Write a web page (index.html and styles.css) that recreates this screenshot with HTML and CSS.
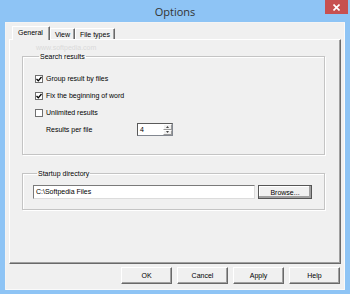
FILE: index.html
```html
<!DOCTYPE html>
<html lang="en">
<head>
  <meta charset="UTF-8" />
  <title>Options</title>
  <link rel="stylesheet" href="styles.css">
</head>
<body>

  <div class="window">

    <!-- Title bar -->
    <div class="titlebar">
      <span></span>
      <span class="title">Options</span>
      <button class="close-btn">
        <svg width="7" height="7" viewBox="0 0 7 7"><path d="M0.5 0.5 L6.5 6.5 M6.5 0.5 L0.5 6.5" stroke="#fff" stroke-width="1.6"/></svg>
      </button>
    </div>

    <div class="client">

      <!-- Tabs -->
      <div class="tabs">
        <div class="tab active">General</div>
        <div class="tab">View</div>
        <div class="tab">File types</div>
      </div>

      <!-- Tab page -->
      <div class="panel">
        <span class="watermark">www.softpedia.com</span>

        <fieldset class="group search-group">
          <legend>Search results</legend>
          <label class="check-row">
            <span class="checkbox checked"><svg width="6" height="6" viewBox="0 0 6 6"><path d="M0.5 3 L2.3 4.8 L5.5 1" fill="none" stroke="#000" stroke-width="1.3"/></svg></span>
            Group result by files
          </label>
          <label class="check-row">
            <span class="checkbox checked"><svg width="6" height="6" viewBox="0 0 6 6"><path d="M0.5 3 L2.3 4.8 L5.5 1" fill="none" stroke="#000" stroke-width="1.3"/></svg></span>
            Fix the beginning of word
          </label>
          <label class="check-row">
            <span class="checkbox"></span>
            Unlimited results
          </label>
          <div class="check-row spin-row">
            <span class="spin-label">Results per file</span>
            <div class="spinner">
              <span class="spin-value">4</span>
              <div class="spin-btns">
                <span class="spin-btn"><svg width="3" height="2" viewBox="0 0 3 2"><path d="M0 2 L1.5 0 L3 2 Z" fill="#444"/></svg></span>
                <span class="spin-btn"><svg width="3" height="2" viewBox="0 0 3 2"><path d="M0 0 L1.5 2 L3 0 Z" fill="#444"/></svg></span>
              </div>
            </div>
          </div>
        </fieldset>

        <fieldset class="group startup-group">
          <legend>Startup directory</legend>
          <div class="dir-row">
            <div class="text-field">C:\Softpedia Files</div>
            <button class="btn browse-btn">Browse...</button>
          </div>
        </fieldset>
      </div>

      <!-- Dialog buttons -->
      <div class="dialog-buttons">
        <button class="btn">OK</button>
        <button class="btn">Cancel</button>
        <button class="btn">Apply</button>
        <button class="btn">Help</button>
      </div>

    </div>
  </div>

</body>
</html>
```

FILE: styles.css
```css
body {
  margin: 0;
  padding: 0;
  font-family: 'Liberation Sans', Arial, sans-serif;
  font-size: 7px;
  color: #000;
}

.window {
  width: 350px;
  height: 294px;
  background-color: #8ec4f5;
  display: flex;
  flex-direction: column;
  box-sizing: border-box;
  padding: 0 5px 4px 5px;
}

.titlebar {
  height: 22px;
  display: grid;
  grid-template-columns: 1fr auto 1fr;
  align-items: center;
}

.title {
  font-family: 'Open Sans', 'Noto Sans', sans-serif;
  font-size: 11px;
  color: #333;
}

.close-btn {
  justify-self: end;
  align-self: start;
  width: 23px;
  height: 14px;
  margin-right: -3px;
  padding: 0;
  border: none;
  background-color: #c75050;
  display: flex;
  align-items: center;
  justify-content: center;
}

.client {
  flex: 1;
  background-color: #f0f0f0;
  display: flex;
  flex-direction: column;
  padding: 4px 4px 6px 4px;
  box-shadow: inset 1px 1px 0 #f4f4f4, inset -1px -1px 0 #fafafa;
  position: relative;
}

/* Tabs */
.tabs {
  display: flex;
  align-items: flex-end;
  height: 13px;
  padding-left: 5px;
}

.tab {
  height: 11px;
  line-height: 11px;
  padding: 0 4px;
  border-top: 1px solid #fff;
  border-left: 1px solid #fff;
  border-right: 1px solid #696969;
  box-shadow: inset -1px 0 0 #a0a0a0;
  box-sizing: border-box;
  border-radius: 1px 1px 0 0;
}

.tab.active {
  height: 14px;
  line-height: 12px;
  margin: 0 -1px -1px -2px;
  padding: 0 6px 0 5px;
  background-color: #f0f0f0;
  position: relative;
  z-index: 1;
}

.tab.active + .tab {
  margin-left: 1px;
}

/* Tab page */
.panel {
  flex: 1;
  position: relative;
  border-top: 1px solid #fff;
  border-left: 1px solid #fff;
  border-right: 1px solid #696969;
  border-bottom: 1px solid #696969;
  box-shadow: inset -1px -1px 0 #a0a0a0;
  padding: 12px 15px 0 12px;
}

.watermark {
  position: absolute;
  left: 26px;
  top: 4px;
  color: #dadada;
  font-size: 7px;
}

.group {
  margin: 0;
  border: 1px solid #c4c4c4;
  box-shadow: 1px 1px 0 #fff, inset 1px 1px 0 #fff;
  padding: 0;
}

.group legend {
  padding: 0 1px;
  margin-left: 4px;
  line-height: 9px;
}

.search-group {
  padding: 9px 12px 16px 12px;
}

.check-row {
  display: flex;
  align-items: center;
  height: 17px;
  gap: 3px;
}

.checkbox {
  width: 8px;
  height: 8px;
  box-sizing: border-box;
  border: 1px solid #707070;
  background-color: #fff;
  display: flex;
  align-items: center;
  justify-content: center;
}

.spin-row {
  padding-left: 11px;
  gap: 0;
}

.spin-label {
  width: 91px;
}

.spinner {
  width: 36px;
  height: 13px;
  box-sizing: border-box;
  border: 1px solid #828790;
  border-top-color: #5a5a5a;
  border-left-color: #5a5a5a;
  background-color: #fff;
  display: flex;
}

.spin-value {
  flex: 1;
  padding-left: 2px;
  line-height: 11px;
}

.spin-btns {
  width: 9px;
  display: flex;
  flex-direction: column;
}

.spin-btn {
  flex: 1;
  background-color: #f0f0f0;
  border: 1px solid #9a9a9a;
  border-top-color: #fff;
  border-left-color: #fff;
  display: flex;
  align-items: center;
  justify-content: center;
}

.startup-group {
  margin-top: 14px;
  padding: 7px 12px 10px 10px;
}

.dir-row {
  display: flex;
  gap: 3px;
  height: 14px;
}

.text-field {
  flex: 1;
  background-color: #fff;
  border: 1px solid #7a7a7a;
  border-right-color: #dcdcdc;
  border-bottom-color: #dcdcdc;
  line-height: 12px;
  padding-left: 2px;
}

/* Buttons */
.btn {
  font-family: 'Liberation Sans', Arial, sans-serif;
  font-size: 7px;
  color: #000;
  background-color: #f0f0f0;
  border: 1px solid #fff;
  border-right-color: #696969;
  border-bottom-color: #696969;
  box-shadow: inset -1px -1px 0 #a0a0a0;
  padding: 0;
  height: 17px;
  width: 51px;
}

.browse-btn {
  width: 54px;
  height: 14px;
  outline: 1px solid #555;
  outline-offset: -1px;
  border-width: 1px;
  box-shadow: inset -2px -2px 0 #a0a0a0, inset 1px 1px 0 #fff;
}

.dialog-buttons {
  display: flex;
  justify-content: flex-end;
  gap: 5px;
  margin-top: 3px;
  padding-right: 1px;
}
```
